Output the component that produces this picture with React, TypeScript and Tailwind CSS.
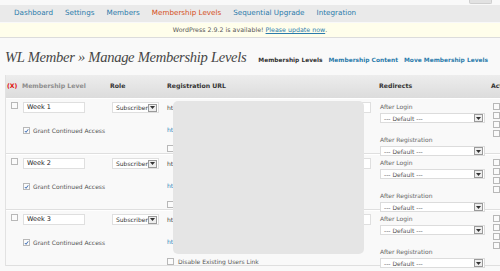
const navItems = [
  { label: "Dashboard" },
  { label: "Settings" },
  { label: "Members" },
  { label: "Membership Levels", active: true },
  { label: "Sequential Upgrade" },
  { label: "Integration" },
];

function Box({ checked = false }: { checked?: boolean }) {
  return (
    <span className="flex h-[7px] w-[7px] shrink-0 items-center justify-center border border-[#b8b8b8] bg-[#fbfbfb]">
      {checked && (
        <svg width="6" height="6" viewBox="0 0 6 6">
          <path d="M1 3 L2.5 4.6 L5 1" fill="none" stroke="#3f6fb5" strokeWidth="1.2" />
        </svg>
      )}
    </span>
  );
}

function Arrow() {
  return (
    <span className="flex h-[8px] w-[9px] items-center justify-center border border-[#9a9a9a] bg-[#eeeeee]">
      <svg width="5" height="3" viewBox="0 0 5 3">
        <path d="M0 0 H5 L2.5 3 Z" fill="#333" />
      </svg>
    </span>
  );
}

function Select({ text }: { text: string }) {
  return (
    <div className="flex h-[10px] w-[105px] items-center justify-between border border-[#dcdcdc] bg-white pl-[3px] pr-[1px]">
      <span className="text-[6px] text-[#555]">{text}</span>
      <Arrow />
    </div>
  );
}

function Row({ name, last }: { name: string; last?: boolean }) {
  return (
    <div className="flex h-[56px] border-t border-white border-b border-b-[#dfdfdf] bg-[#f9f9f9]">
      <div className="w-[15px] shrink-0 pl-[5px] pt-[3px]">
        <Box />
      </div>
      <div className="w-[87px] shrink-0 pl-[2px] pt-[3px]">
        <div className="flex h-[11px] w-[62px] items-center border border-[#dfdfdf] bg-white pl-[3px] text-[6.5px] text-[#222]">
          {name}
        </div>
        <div className="mt-[13px] flex items-center gap-[3px]">
          <Box checked />
          <span className="whitespace-nowrap text-[6px] text-[#555]">Grant Continued Access</span>
        </div>
      </div>
      <div className="w-[56px] shrink-0 pl-[4px] pt-[3px]">
        <div className="flex h-[11px] w-[47px] items-center justify-between border border-[#dfdfdf] bg-white pl-[3px] pr-[1px]">
          <span className="text-[6px] text-[#333]">Subscriber</span>
          <Arrow />
        </div>
      </div>
      <div className="w-[212px] shrink-0 pl-[3px] pt-[3px] text-[6px]">
        <div className="flex h-[11px] items-center gap-[3px]">
          <span className="text-[#444]">htt</span>
          <div className="h-[11px] w-[192px] border border-[#dfdfdf] bg-white" />
        </div>
        <div className="mt-[12px] text-[#2e86b9]">htt</div>
        <div className="mt-[11px] flex items-center gap-[4px]">
          <Box />
          {last && <span className="whitespace-nowrap text-[#555]">Disable Existing Users Link</span>}
        </div>
      </div>
      <div className="w-[113px] shrink-0 pl-[4px] pt-[3px] text-[6px] text-[#666]">
        <div>After Login</div>
        <div className="mt-[2px]">
          <Select text="--- Default ---" />
        </div>
        <div className="mt-[12px]">After Registration</div>
        <div className="mt-[2px]">
          <Select text="--- Default ---" />
        </div>
      </div>
      <div className="flex shrink-0 flex-col gap-[2px] pl-[4px] pt-[4px]">
        <Box />
        <Box />
        <Box />
        <Box />
      </div>
    </div>
  );
}

export default function App() {
  return (
    <div className="relative h-[271px] w-[500px] overflow-hidden bg-[#f9f9f9] font-['DejaVu_Sans',sans-serif]">
      <div className="flex h-[5px] justify-end pr-[8px]">
        <div className="h-[4px] w-[23px] rounded-b-[2px] border border-t-0 border-[#cfcfcf] bg-[#e2e2e2]" />
      </div>
      <nav className="flex h-[17px] items-center gap-[12px] bg-[#eaeaea] pl-[14px] text-[7.2px]">
        {navItems.map((n) => (
          <span key={n.label} className={n.active ? "text-[#d54e21]" : "text-[#2b7bab]"}>
            {n.label}
          </span>
        ))}
      </nav>
      <div className="mt-px flex h-[15px] items-center justify-center border-b border-[#dcdcdc] bg-[#fffeeb] text-[6.3px] text-[#555]">
        WordPress 2.9.2 is available!&nbsp;<span className="text-[#2b7bab] underline">Please update now</span>.
      </div>
      <div className="flex items-end justify-between pl-[5px] pr-[12px] pt-[8px]">
        <h1 className="shrink-0 whitespace-nowrap font-['Liberation_Serif',serif] text-[14.6px] italic leading-[22px] tracking-[-0.3px] text-[#464646]">
          WL Member » Manage Membership Levels
        </h1>
        <div className="mb-[3px] flex gap-[6px] whitespace-nowrap text-[5.9px] font-bold">
          <span className="text-[#333]">Membership Levels</span>
          <span className="text-[#2b7bab]">Membership Content</span>
          <span className="text-[#2b7bab]">Move Membership Levels</span>
        </div>
      </div>
      <div className="ml-[5px] mt-[7px] border-l border-[#e2e2e2]">
        <div className="flex h-[23px] whitespace-nowrap bg-gradient-to-b from-[#ededed] to-[#dcdcdc] pt-[6px] text-[6.2px] font-bold text-[#333]">
          <div className="w-[15px] shrink-0 pl-[1px] text-[#e01010]">(X)</div>
          <div className="w-[87px] shrink-0 pl-[1px] text-[#8c8c8c]">Membership Level</div>
          <div className="w-[56px] shrink-0 pl-[2px]">Role</div>
          <div className="w-[212px] shrink-0 pl-[3px]">Registration URL</div>
          <div className="w-[113px] shrink-0 pl-[3px]">Redirects</div>
          <div className="shrink-0 pl-[2px]">Actions</div>
        </div>
        <Row name="Week 1" />
        <Row name="Week 2" />
        <Row name="Week 3" last />
      </div>
      <div className="absolute left-[173px] top-[101px] h-[153px] w-[191px] rounded-[5px] bg-[#e5e5e5]" />
    </div>
  );
}
